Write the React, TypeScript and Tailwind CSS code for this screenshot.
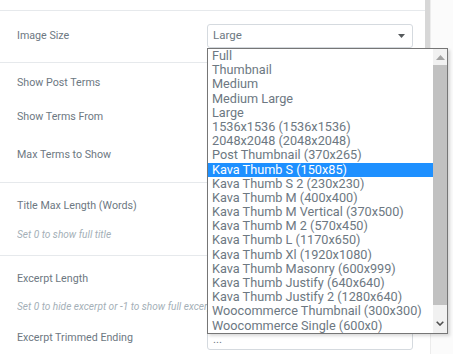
import React from "react"

const options = [
  "Full",
  "Thumbnail",
  "Medium",
  "Medium Large",
  "Large",
  "1536x1536 (1536x1536)",
  "2048x2048 (2048x2048)",
  "Post Thumbnail (370x265)",
  "Kava Thumb S (150x85)",
  "Kava Thumb S 2 (230x230)",
  "Kava Thumb M (400x400)",
  "Kava Thumb M Vertical (370x500)",
  "Kava Thumb M 2 (570x450)",
  "Kava Thumb L (1170x650)",
  "Kava Thumb Xl (1920x1080)",
  "Kava Thumb Masonry (600x999)",
  "Kava Thumb Justify (640x640)",
  "Kava Thumb Justify 2 (1280x640)",
  "Woocommerce Thumbnail (300x300)",
  "Woocommerce Single (600x0)",
]

function Label({ children, className = "" }: { children: React.ReactNode; className?: string }) {
  return <div className={"text-[10.7px] leading-[14px] text-[#6d7882] whitespace-nowrap " + className}>{children}</div>
}

function Desc({ children, className = "" }: { children: React.ReactNode; className?: string }) {
  return (
    <div className={"w-[190px] overflow-hidden " + className}>
      <p className="text-[10.1px] leading-[14px] italic text-[#a4afb7] whitespace-nowrap">{children}</p>
    </div>
  )
}

export default function App() {
  return (
    <div className="relative w-[453px] h-[354px] overflow-hidden bg-white font-['Roboto',sans-serif]">
      <div className="flex h-full">
        {/* controls panel */}
        <div className="w-[425px] shrink-0">
          <div className="h-[11px] border-b border-[#e6e9ec]" />

          <div className="h-[52px] border-b border-[#e6e9ec] flex items-center pl-[17px] pr-[12px] pb-[2px]">
            <div className="flex-1">
              <Label>Image Size</Label>
            </div>
            <div className="w-[206px] h-[24px] border border-[#d5dadf] rounded-[3px] flex items-center justify-between pl-[5px] pr-[7px]">
              <span className="text-[11.5px] text-[#6d7882]">Large</span>
              <svg width="7" height="4" viewBox="0 0 7 4">
                <path d="M0 0h7L3.5 4z" fill="#55595c" />
              </svg>
            </div>
          </div>

          <div className="h-[120px] border-b border-[#e6e9ec] pl-[17px]">
            <Label className="pt-[13px]">Show Post Terms</Label>
            <Label className="mt-[20px]">Show Terms From</Label>
            <Label className="mt-[24px]">Max Terms to Show</Label>
          </div>

          <div className="h-[73px] border-b border-[#e6e9ec] pl-[17px]">
            <Label className="pt-[16px]">Title Max Length (Words)</Label>
            <Desc className="mt-[15px]">Set 0 to show full title</Desc>
          </div>

          <div className="pl-[17px] pr-[12px]">
            <Label className="pt-[16px]">Excerpt Length</Label>
            <Desc className="mt-[14px]">Set 0 to hide excerpt or -1 to show full excerpt</Desc>
            <div className="mt-[12px] h-[24px] flex items-center justify-between">
              <Label>Excerpt Trimmed Ending</Label>
              <div className="w-[206px] h-[24px] border border-[#d5dadf] rounded-[3px] flex items-center pl-[5px] pt-[4px]">
                <span className="text-[11.5px] text-[#6d7882]">...</span>
              </div>
            </div>
          </div>
        </div>

        {/* page scrollbar */}
        <div className="w-[5px] shrink-0 bg-white">
          <div className="h-[300px] bg-[#d7d7d7]" />
        </div>
        <div className="flex-1 bg-[#fbfbfb] border-l border-[#ececec]" />
      </div>

      {/* open select list */}
      <div className="absolute left-[207px] top-[48px] w-[241px] h-[286px] bg-white border border-[#767676] shadow-[2px_2px_3px_rgba(0,0,0,0.15)] flex">
        <ul className="flex-1 min-w-0 overflow-hidden">
          {options.map((o) => (
            <li
              key={o}
              className={
                o === "Kava Thumb S (150x85)"
                  ? "h-[14.2px] leading-[14.2px] pl-[4px] text-[12.7px] whitespace-nowrap bg-[#1e90ff] text-white"
                  : "h-[14.2px] leading-[14.2px] pl-[4px] text-[12.7px] whitespace-nowrap text-[#6d7882]"
              }
            >
              {o}
            </li>
          ))}
        </ul>
        <div className="w-[14px] bg-[#f1f1f1] flex flex-col items-center">
          <div className="h-[16px] flex items-center justify-center">
            <svg width="9" height="5" viewBox="0 0 9 5">
              <path d="M4.5 0L9 5H0z" fill="#a3a3a3" />
            </svg>
          </div>
          <div className="w-full h-[240px] bg-[#c1c1c1]" />
          <div className="flex-1 flex items-center justify-center pt-[8px]">
            <svg width="8" height="5" viewBox="0 0 8 5">
              <path d="M0.7 0.7L4 4L7.3 0.7" stroke="#505050" strokeWidth="1.6" fill="none" />
            </svg>
          </div>
        </div>
      </div>
    </div>
  )
}
